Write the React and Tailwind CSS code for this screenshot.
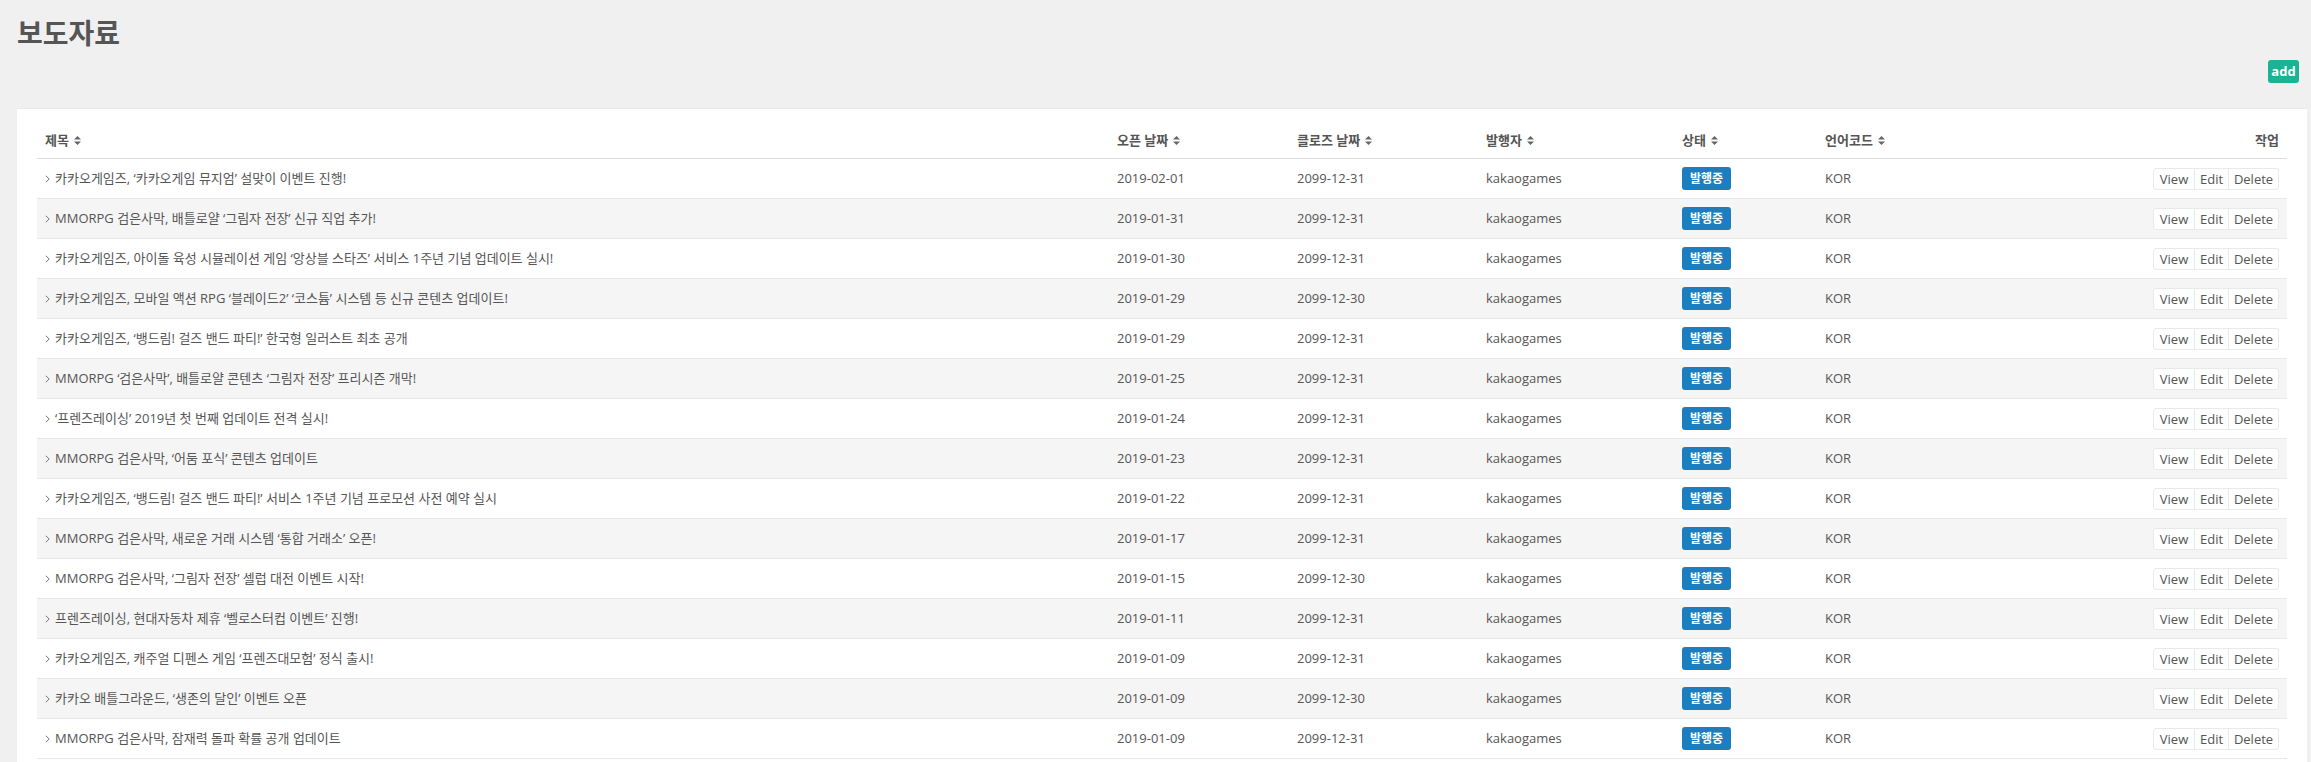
import React from "react";

const rows = [
  ["카카오게임즈, ‘카카오게임 뮤지엄’ 설맞이 이벤트 진행!", "2019-02-01", "2099-12-31"],
  ["MMORPG 검은사막, 배틀로얄 ‘그림자 전장’ 신규 직업 추가!", "2019-01-31", "2099-12-31"],
  ["카카오게임즈, 아이돌 육성 시뮬레이션 게임 ‘앙상블 스타즈’ 서비스 1주년 기념 업데이트 실시!", "2019-01-30", "2099-12-31"],
  ["카카오게임즈, 모바일 액션 RPG ‘블레이드2’ ‘코스튬’ 시스템 등 신규 콘텐츠 업데이트!", "2019-01-29", "2099-12-30"],
  ["카카오게임즈, ‘뱅드림! 걸즈 밴드 파티!’ 한국형 일러스트 최초 공개", "2019-01-29", "2099-12-31"],
  ["MMORPG ‘검은사막’, 배틀로얄 콘텐츠 ‘그림자 전장’ 프리시즌 개막!", "2019-01-25", "2099-12-31"],
  ["‘프렌즈레이싱’ 2019년 첫 번째 업데이트 전격 실시!", "2019-01-24", "2099-12-31"],
  ["MMORPG 검은사막, ‘어둠 포식’ 콘텐츠 업데이트", "2019-01-23", "2099-12-31"],
  ["카카오게임즈, ‘뱅드림! 걸즈 밴드 파티!’ 서비스 1주년 기념 프로모션 사전 예약 실시", "2019-01-22", "2099-12-31"],
  ["MMORPG 검은사막, 새로운 거래 시스템 ‘통합 거래소’ 오픈!", "2019-01-17", "2099-12-31"],
  ["MMORPG 검은사막, ‘그림자 전장’ 셀럽 대전 이벤트 시작!", "2019-01-15", "2099-12-30"],
  ["프렌즈레이싱, 현대자동차 제휴 ‘벨로스터컵 이벤트’ 진행!", "2019-01-11", "2099-12-31"],
  ["카카오게임즈, 캐주얼 디펜스 게임 ‘프렌즈대모험’ 정식 출시!", "2019-01-09", "2099-12-31"],
  ["카카오 배틀그라운드, ‘생존의 달인’ 이벤트 오픈", "2019-01-09", "2099-12-30"],
  ["MMORPG 검은사막, 잠재력 돌파 확률 공개 업데이트", "2019-01-09", "2099-12-31"],
];

const cols = "grid grid-cols-[1072px_180px_189px_196px_143px_283px_1fr]";

const SortIcon = () => (
  <svg width="7" height="11" viewBox="0 0 7 11" className="ml-[5px] inline-block">
    <polygon points="0,4.5 3.5,1 7,4.5" fill="#666" />
    <polygon points="0,6.5 3.5,10 7,6.5" fill="#666" />
  </svg>
);

const Chevron = () => (
  <svg width="5" height="8" viewBox="0 0 5 8" className="mr-[5px] shrink-0">
    <polyline points="0.8,0.8 4.2,4 0.8,7.2" fill="none" stroke="#777" strokeWidth="1" />
  </svg>
);

const Th = ({ children, sort = true }) => (
  <div className="px-[8px] py-[8px] leading-[19px] font-semibold text-[#555] flex items-center">
    {children}
    {sort && <SortIcon />}
  </div>
);

export default function App() {
  return (
    <div
      className="h-screen overflow-hidden bg-[#f0f0f0] text-[13px] text-[#555]"
      style={{ fontFamily: '"Open Sans", "Noto Sans CJK KR", sans-serif' }}
    >
      {/* title + add */}
      <div className="pl-[17px] pr-[12px] pt-[14px]">
        <h2 className="text-[28px] font-bold leading-[38px] text-[#555]">보도자료</h2>
        <div className="flex justify-end mt-[8px]">
          <button className="h-[23px] w-[31px] rounded-[3px] bg-[#1ab394] text-white font-bold text-[13px] leading-[23px]">
            add
          </button>
        </div>
      </div>

      {/* list card */}
      <div className="ml-[17px] mr-[4px] mt-[25px] bg-white border-t border-[#e7eaec] px-[20px] pt-[14px] pb-[20px]">
        <div className={`${cols} border-b border-[#dddddd]`}>
          <Th>제목</Th>
          <Th>오픈 날짜</Th>
          <Th>클로즈 날짜</Th>
          <Th>발행자</Th>
          <Th>상태</Th>
          <Th>언어코드</Th>
          <div className="px-[8px] py-[8px] leading-[19px] font-semibold text-[#555] text-right">작업</div>
        </div>

        {rows.map(([title, open, close], i) => (
          <div
            key={i}
            className={`${cols} h-[40px] items-center border-b border-[#e7e7e7] ${
              i % 2 === 1 ? "bg-[#f5f5f5]" : "bg-white"
            }`}
          >
            <div className="px-[8px] flex items-center whitespace-nowrap">
              <Chevron />
              {title}
            </div>
            <div className="px-[8px]">{open}</div>
            <div className="px-[8px]">{close}</div>
            <div className="px-[8px]">kakaogames</div>
            <div className="px-[8px]">
              <span className="inline-block h-[23px] w-[49px] rounded-[3px] bg-[#1c7ebf] text-white text-[12px] font-bold leading-[23px] text-center">
                발행중
              </span>
            </div>
            <div className="px-[8px]">KOR</div>
            <div className="px-[8px] flex justify-end">
              <div className="flex h-[22px] bg-white border border-[#e7eaec] rounded-[3px] text-[13px] leading-[20px] text-[#555]">
                <span className="w-[40px] text-center">View</span>
                <span className="w-[34px] text-center border-l border-[#e7eaec]">Edit</span>
                <span className="w-[50px] text-center border-l border-[#e7eaec]">Delete</span>
              </div>
            </div>
          </div>
        ))}
      </div>
    </div>
  );
}
